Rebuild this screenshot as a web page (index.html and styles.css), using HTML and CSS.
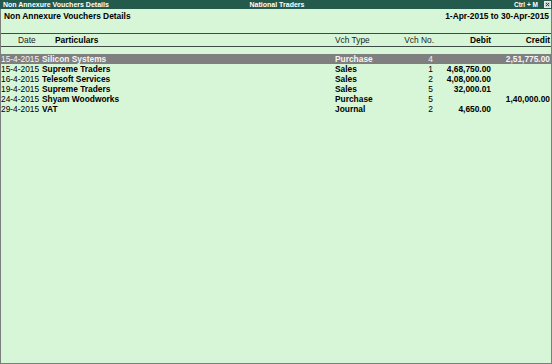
FILE: index.html
```html
<!DOCTYPE html>
<html>
<head>
<meta charset="utf-8">
<link rel="stylesheet" href="styles.css">
</head>
<body>
<div class="window">
  <div class="titlebar">
    <span class="tb-left">Non Annexure Vouchers Details</span>
    <span class="tb-mid">National Traders</span>
    <span class="tb-right">Ctrl + M <span class="close"><svg width="7" height="7" viewBox="0 0 7 7"><rect x="0.5" y="0.5" width="6" height="6" fill="#c9d3cf" stroke="#e8ece9"/><path d="M2 2L5 5M5 2L2 5" stroke="#1f4f42" stroke-width="1"/></svg></span></span>
  </div>
  <div class="heading">
    <span class="h-title">Non Annexure Vouchers Details</span>
    <span class="h-period">1-Apr-2015 to 30-Apr-2015</span>
  </div>
  <div class="colhead grid">
    <span class="c-date">Date</span>
    <span class="c-part b">Particulars</span>
    <span class="c-type">Vch Type</span>
    <span class="c-no">Vch No.</span>
    <span class="c-dr b">Debit</span>
    <span class="c-cr b">Credit</span>
  </div>
  <div class="spacer"></div>
  <div class="rows">
    <div class="row grid sel">
      <span class="c-date">15-4-2015</span><span class="c-part b">Silicon Systems</span><span class="c-type b">Purchase</span><span class="c-no">4</span><span class="c-dr b"></span><span class="c-cr b">2,51,775.00</span>
    </div>
    <div class="row grid">
      <span class="c-date">15-4-2015</span><span class="c-part b">Supreme Traders</span><span class="c-type b">Sales</span><span class="c-no">1</span><span class="c-dr b">4,68,750.00</span><span class="c-cr b"></span>
    </div>
    <div class="row grid">
      <span class="c-date">16-4-2015</span><span class="c-part b">Telesoft Services</span><span class="c-type b">Sales</span><span class="c-no">2</span><span class="c-dr b">4,08,000.00</span><span class="c-cr b"></span>
    </div>
    <div class="row grid">
      <span class="c-date">19-4-2015</span><span class="c-part b">Supreme Traders</span><span class="c-type b">Sales</span><span class="c-no">5</span><span class="c-dr b">32,000.01</span><span class="c-cr b"></span>
    </div>
    <div class="row grid">
      <span class="c-date">24-4-2015</span><span class="c-part b">Shyam Woodworks</span><span class="c-type b">Purchase</span><span class="c-no">5</span><span class="c-dr b"></span><span class="c-cr b">1,40,000.00</span>
    </div>
    <div class="row grid">
      <span class="c-date">29-4-2015</span><span class="c-part b">VAT</span><span class="c-type b">Journal</span><span class="c-no">2</span><span class="c-dr b">4,650.00</span><span class="c-cr b"></span>
    </div>
  </div>
</div>
</body>
</html>
```

FILE: styles.css
```css
html, body {
  margin: 0;
  padding: 0;
}
body {
  font-family: "Liberation Sans", Arial, sans-serif;
  font-size: 8.4px;
  color: #111;
}
.window {
  width: 552px;
  height: 364px;
  box-sizing: border-box;
  border: 1px solid #7b7f7c;
  border-top: none;
  background: #d7f6d7;
  display: flex;
  flex-direction: column;
}
.titlebar {
  height: 9px;
  background: #235a4c;
  color: #fff;
  font-weight: bold;
  font-size: 7px;
  line-height: 9px;
  display: grid;
  grid-template-columns: 1fr auto 1fr;
  padding: 0 1px 0 3px;
  margin: 0 -1px;
}
.tb-mid {
  text-align: center;
}
.tb-right {
  display: flex;
  justify-content: flex-end;
  align-items: center;
  gap: 6px;
  font-size: 6.5px;
}
.close {
  display: flex;
  width: 7px;
  height: 7px;
}
.heading {
  height: 24px;
  display: flex;
  justify-content: space-between;
  font-weight: bold;
  line-height: 12px;
  padding: 1px 2px 0 3px;
  box-sizing: border-box;
  color: #000;
}
.grid {
  display: grid;
  grid-template-columns: 40px 294px 65px 36px 55px 59px;
  padding-right: 1px;
}
.colhead {
  border-top: 1px solid #3e4a44;
  border-bottom: 1px solid #3e4a44;
  height: 12px;
  line-height: 12px;
  color: #222;
}
.colhead .c-date {
  padding-left: 17px;
}
.colhead .c-part {
  padding-left: 14px;
}
.spacer {
  height: 7px;
}
.row {
  height: 10px;
  line-height: 10px;
  color: #000;
}
.row .c-part {
  padding-left: 1px;
}
.sel {
  background: #7f7f7f;
  color: #f2f2f2;
}
.b {
  font-weight: bold;
  color: #000;
}
.sel .b {
  color: #f4f4f4;
}
.c-no, .c-dr, .c-cr {
  text-align: right;
}
.c-no {
  padding-right: 2px;
}
.row .c-no {
  padding-right: 3px;
}
.c-date, .c-part, .c-type {
  white-space: nowrap;
}
```
